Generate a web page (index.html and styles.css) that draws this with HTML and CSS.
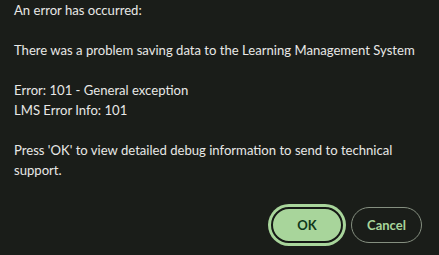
FILE: index.html
```html
<!DOCTYPE html>
<html lang="en">
<head>
    <meta charset="UTF-8">
    <meta name="viewport" content="width=device-width, initial-scale=1.0">
    <title>Error</title>
    <link rel="stylesheet" href="styles.css">
</head>
<body>
    <div class="dialog">
        <div class="message">
            An error has occurred:<br>
            <br>
            There was a problem saving data to the Learning Management System<br>
            <br>
            Error: 101 - General exception<br>
            LMS Error Info: 101<br>
            <br>
            Press 'OK' to view detailed debug information to send to technical support.
        </div>
        <div class="actions">
            <button class="btn btn-ok">OK</button>
            <button class="btn btn-cancel">Cancel</button>
        </div>
    </div>
</body>
</html>
```

FILE: styles.css
```css
body {
    margin: 0;
    background-color: #1a1d19;
    font-family: 'Lato', sans-serif;
    color: #e8e8e6;
}

.dialog {
    width: 439px;
    height: 255px;
    box-sizing: border-box;
    padding: 0 17px 12px 14px;
    display: flex;
    flex-direction: column;
}

.message {
    font-size: 13.1px;
    line-height: 20px;
    flex: 1;
}

.actions {
    display: flex;
    justify-content: flex-end;
    gap: 8px;
}

.btn {
    height: 36px;
    border-radius: 18px;
    font-family: 'Lato', sans-serif;
    font-size: 13px;
    font-weight: 700;
    padding: 0;
    cursor: pointer;
}

.btn-ok {
    width: 72px;
    background-color: #a8d59b;
    color: #10381a;
    border: 2px solid #151915;
    box-shadow: 0 0 0 3px #a8d59b;
}

.btn-cancel {
    width: 71px;
    background: transparent;
    color: #a8d59b;
    border: 1px solid #858f80;
}
```
